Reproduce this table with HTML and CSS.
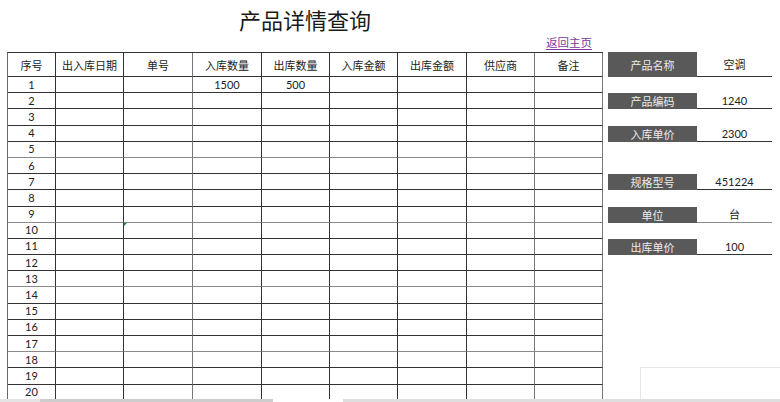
FILE: index.html
```html
<!DOCTYPE html>
<html lang="zh-CN">
<head>
<meta charset="utf-8">
<title>产品详情查询</title>
<link rel="stylesheet" href="styles.css">
</head>
<body>
<div class="page">
  <div class="head">
    <div class="title">产品详情查询</div>
    <div class="link-row"><a class="home" href="#">返回主页</a></div>
  </div>
  <div class="main">
    <div class="sheet">
      <div class="row hdr">
        <div class="c">序号</div><div class="c">出入库日期</div><div class="c">单号</div><div class="c">入库数量</div><div class="c">出库数量</div><div class="c">入库金额</div><div class="c">出库金额</div><div class="c">供应商</div><div class="c">备注</div>
      </div>
      <div class="row"><div class="c">1</div><div class="c"></div><div class="c"></div><div class="c">1500</div><div class="c">500</div><div class="c"></div><div class="c"></div><div class="c"></div><div class="c"></div></div>
      <div class="row"><div class="c">2</div><div class="c"></div><div class="c"></div><div class="c"></div><div class="c"></div><div class="c"></div><div class="c"></div><div class="c"></div><div class="c"></div></div>
      <div class="row"><div class="c">3</div><div class="c"></div><div class="c"></div><div class="c"></div><div class="c"></div><div class="c"></div><div class="c"></div><div class="c"></div><div class="c"></div></div>
      <div class="row"><div class="c">4</div><div class="c"></div><div class="c"></div><div class="c"></div><div class="c"></div><div class="c"></div><div class="c"></div><div class="c"></div><div class="c"></div></div>
      <div class="row"><div class="c">5</div><div class="c"></div><div class="c"></div><div class="c"></div><div class="c"></div><div class="c"></div><div class="c"></div><div class="c"></div><div class="c"></div></div>
      <div class="row"><div class="c">6</div><div class="c"></div><div class="c"></div><div class="c"></div><div class="c"></div><div class="c"></div><div class="c"></div><div class="c"></div><div class="c"></div></div>
      <div class="row"><div class="c">7</div><div class="c"></div><div class="c"></div><div class="c"></div><div class="c"></div><div class="c"></div><div class="c"></div><div class="c"></div><div class="c"></div></div>
      <div class="row"><div class="c">8</div><div class="c"></div><div class="c"></div><div class="c"></div><div class="c"></div><div class="c"></div><div class="c"></div><div class="c"></div><div class="c"></div></div>
      <div class="row"><div class="c">9</div><div class="c"></div><div class="c"></div><div class="c"></div><div class="c"></div><div class="c"></div><div class="c"></div><div class="c"></div><div class="c"></div></div>
      <div class="row"><div class="c">10</div><div class="c"></div><div class="c flag"></div><div class="c"></div><div class="c"></div><div class="c"></div><div class="c"></div><div class="c"></div><div class="c"></div></div>
      <div class="row"><div class="c">11</div><div class="c"></div><div class="c"></div><div class="c"></div><div class="c"></div><div class="c"></div><div class="c"></div><div class="c"></div><div class="c"></div></div>
      <div class="row"><div class="c">12</div><div class="c"></div><div class="c"></div><div class="c"></div><div class="c"></div><div class="c"></div><div class="c"></div><div class="c"></div><div class="c"></div></div>
      <div class="row"><div class="c">13</div><div class="c"></div><div class="c"></div><div class="c"></div><div class="c"></div><div class="c"></div><div class="c"></div><div class="c"></div><div class="c"></div></div>
      <div class="row"><div class="c">14</div><div class="c"></div><div class="c"></div><div class="c"></div><div class="c"></div><div class="c"></div><div class="c"></div><div class="c"></div><div class="c"></div></div>
      <div class="row"><div class="c">15</div><div class="c"></div><div class="c"></div><div class="c"></div><div class="c"></div><div class="c"></div><div class="c"></div><div class="c"></div><div class="c"></div></div>
      <div class="row"><div class="c">16</div><div class="c"></div><div class="c"></div><div class="c"></div><div class="c"></div><div class="c"></div><div class="c"></div><div class="c"></div><div class="c"></div></div>
      <div class="row"><div class="c">17</div><div class="c"></div><div class="c"></div><div class="c"></div><div class="c"></div><div class="c"></div><div class="c"></div><div class="c"></div><div class="c"></div></div>
      <div class="row"><div class="c">18</div><div class="c"></div><div class="c"></div><div class="c"></div><div class="c"></div><div class="c"></div><div class="c"></div><div class="c"></div><div class="c"></div></div>
      <div class="row"><div class="c">19</div><div class="c"></div><div class="c"></div><div class="c"></div><div class="c"></div><div class="c"></div><div class="c"></div><div class="c"></div><div class="c"></div></div>
      <div class="row"><div class="c">20</div><div class="c"></div><div class="c"></div><div class="c"></div><div class="c"></div><div class="c"></div><div class="c"></div><div class="c"></div><div class="c"></div></div>
    </div>
    <div class="panel">
      <div class="lab">产品名称</div><div class="val">空调</div>
      <div class="blank"></div>
      <div class="lab">产品编码</div><div class="val">1240</div>
      <div class="blank"></div>
      <div class="lab">入库单价</div><div class="val">2300</div>
      <div class="blank"></div>
      <div class="blank"></div>
      <div class="lab">规格型号</div><div class="val">451224</div>
      <div class="blank"></div>
      <div class="lab">单位</div><div class="val soft">台</div>
      <div class="blank"></div>
      <div class="lab">出库单价</div><div class="val">100</div>
    </div>
  </div>
</div>
<div class="corner-box"></div>
<div class="hscroll">
  <div class="seg seg-a"></div>
  <div class="seg seg-b"></div>
  <div class="seg seg-gap"></div>
  <div class="seg seg-c"></div>
</div>
</body>
</html>
```

FILE: styles.css
```css
html, body {
  margin: 0;
  padding: 0;
  background: #ffffff;
  overflow: hidden;
  width: 780px;
  height: 402px;
}
body {
  font-family: Lato, "Noto Sans CJK SC", sans-serif;
  font-size: 11px;
  color: #222;
}
.page {
  display: flex;
  flex-direction: column;
  padding-left: 7px;
}
.head {
  width: 596px;
  height: 52px;
  display: flex;
  flex-direction: column;
}
.title {
  text-align: center;
  font-family: "Noto Sans CJK SC", sans-serif;
  font-size: 22px;
  line-height: 26px;
  margin-top: 6px;
  color: #1a1a1a;
}
.link-row {
  display: flex;
  justify-content: flex-end;
  margin-top: 2px;
}
.home {
  width: 68px;
  text-align: center;
  font-family: "Noto Sans CJK SC", sans-serif;
  font-size: 11.5px;
  line-height: 16px;
  color: #7a3a9c;
  text-decoration: underline;
  text-underline-offset: 2px;
}
.main {
  display: flex;
  align-items: flex-start;
}
.sheet {
  display: grid;
  grid-template-columns: 48px 68px 69px 69px 68px 68px 69px 68px 68px;
  grid-template-rows: 24px repeat(20, 16.2px);
  border-left: 1px solid #6a6a6a;
  border-top: 1px solid #333;
}
.row {
  display: contents;
}
.c {
  border-right: 1px solid #333;
  border-bottom: 1px solid #333;
  display: flex;
  align-items: center;
  justify-content: center;
  line-height: 14px;
  white-space: nowrap;
  position: relative;
}
.hdr .c {
  font-family: "Noto Sans CJK SC", sans-serif;
  font-size: 11px;
}
.row .c:nth-child(3),
.row .c:nth-child(8),
.row .c:nth-child(9) {
  border-right-color: #777;
}
.row:nth-child(4n+6) .c {
  border-bottom-color: #8a8a8a;
}
.flag::before {
  content: "";
  position: absolute;
  left: 0;
  top: 0;
  border-top: 3px solid #1f8a3a;
  border-right: 3px solid transparent;
}
.panel {
  margin-left: 5px;
  display: grid;
  grid-template-columns: 89px 75px;
  grid-template-rows: 25px repeat(11, 16.2px);
}
.lab {
  background: #595959;
  color: #ececec;
  font-family: "Noto Sans CJK SC", sans-serif;
  font-size: 11px;
  display: flex;
  align-items: center;
  justify-content: center;
}
.val {
  border-bottom: 1px solid #333;
  display: flex;
  align-items: center;
  justify-content: center;
  font-size: 11px;
}
.val.soft {
  border-bottom-color: #8a8a8a;
}
.blank {
  grid-column: 1 / -1;
}
.corner-box {
  position: absolute;
  left: 640px;
  top: 367px;
  right: 0;
  bottom: 0;
  border-left: 1px solid #e6e6e6;
  border-top: 1px solid #e6e6e6;
  background: #ffffff;
}
.hscroll {
  position: absolute;
  left: 0;
  right: 0;
  bottom: 0;
  height: 3px;
  display: flex;
}
.seg-a {
  width: 40px;
  background: #e4e4e4;
}
.seg-b {
  width: 233px;
  background: #cdcdcd;
}
.seg-gap {
  width: 70px;
  background: #ffffff;
}
.seg-c {
  flex: 1;
  background: #dedede;
}
```
